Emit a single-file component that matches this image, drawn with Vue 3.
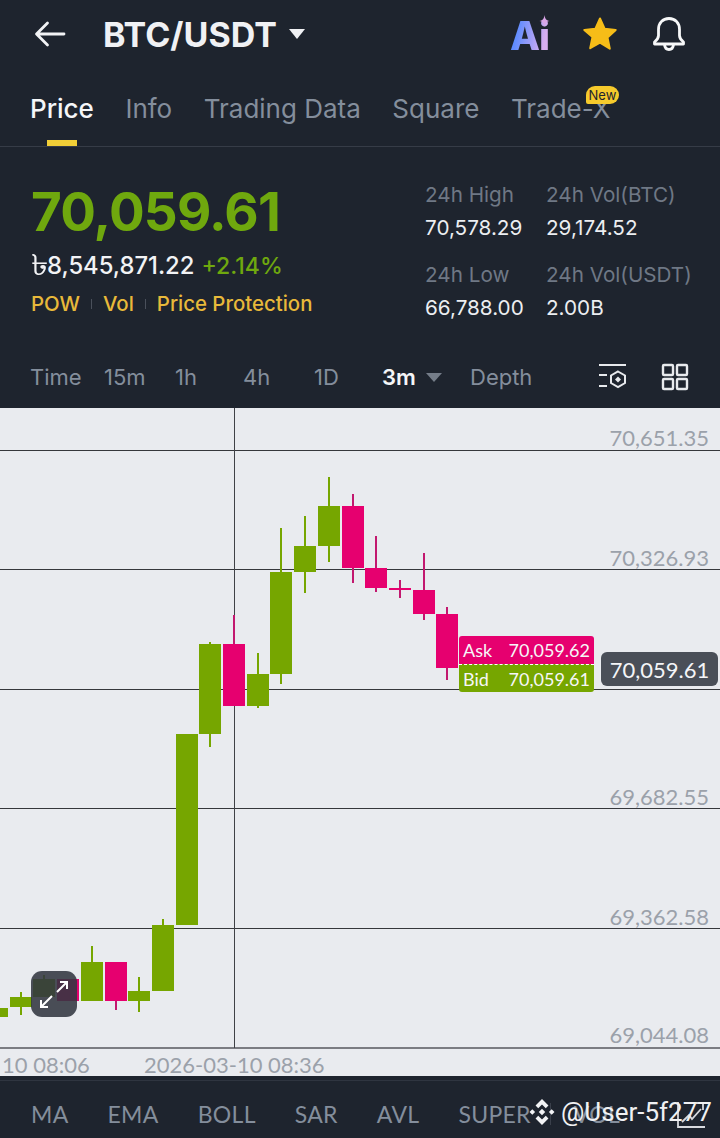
<template>
  <div class="page">
    <header class="top-bar">
      <svg class="back" width="32" height="28" viewBox="0 0 32 28" fill="none" stroke="#f2f3f5" stroke-width="2.8" stroke-linecap="round" stroke-linejoin="round">
        <path d="M30 14H3M13.5 3 2.5 14l11 11" />
      </svg>
      <h1 class="pair">BTC/USDT</h1>
      <i class="pair-caret"></i>
      <div class="top-icons">
        <span class="ai">Ai
          <svg class="spark" width="11" height="12" viewBox="0 0 12 14"><path d="M6 0c.6 4 1.600 6 6 7-4.400 1-5.400 3-6 7-.6-4-1.600-6-6-7 4.400-1 5.400-3 6-7z" fill="#d9a5e6" /></svg>
        </span>
        <svg class="star" width="36" height="36" viewBox="0 0 36 36"><path d="M18 2.500l4.700 10.300 11 1.200-8.200 7.500 2.300 11.200L18 26.600 8.200 32.200l2.300-11.200L2.300 14l11-1.200z" fill="#f6bd18" stroke="#f6bd18" stroke-width="2" stroke-linejoin="round" /></svg>
        <svg class="bell" width="36" height="36" viewBox="0 0 36 36" fill="none" stroke="#f7f8f9" stroke-width="2.800" stroke-linejoin="round" stroke-linecap="round">
          <path d="M18 2.500c-6.500 0-10.500 4.800-10.500 11v6c0 2.500-1.500 4.500-4 6.500v2h29v-2c-2.500-2-4-4-4-6.500v-6c0-6.200-4-11-10.500-11z" />
          <path d="M13.500 28.500c.3 3 2 5 4.500 5s4.200-2 4.500-5" />
        </svg>
      </div>
    </header>

    <nav class="tabs">
      <span v-for="tab in tabs" :key="tab" class="tab" :class="{ active: tab === 'Price' }">
        {{ tab }}
        <em v-if="tab === 'Trade-X'" class="new-badge">New</em>
      </span>
    </nav>

    <section class="summary">
      <div class="quote">
        <div class="last-price">70,059.61</div>
        <div class="fiat-line">
          <span class="fiat"><b class="taka">৳</b>8,545,871.22</span>
          <span class="change">+2.14%</span>
        </div>
        <div class="tags">
          <span>POW</span><i></i><span>Vol</span><i></i><span>Price Protection</span>
        </div>
      </div>
      <dl class="stats">
        <div v-for="stat in stats" :key="stat.label" class="stat">
          <dt>{{ stat.label }}</dt>
          <dd>{{ stat.value }}</dd>
        </div>
      </dl>
    </section>

    <section class="intervals">
      <span>Time</span>
      <span>15m</span>
      <span>1h</span>
      <span>4h</span>
      <span>1D</span>
      <span class="current">3m<i class="small-caret"></i></span>
      <span>Depth</span>
      <svg width="30" height="30" viewBox="0 0 30 30" fill="none" stroke="#e8eaed" stroke-width="2">
        <path d="M1 3h27M1 13h8M1 24h8" />
        <path d="M20 9.500l7 4v7.500l-7 4-7-4v-7.500z" />
        <path d="M20 14.500l3 3-3 3-3-3z" fill="#e8eaed" stroke="none" />
      </svg>
      <svg width="28" height="28" viewBox="0 0 28 28" fill="none" stroke="#e8eaed" stroke-width="2.400">
        <rect x="2" y="2" width="10" height="10" rx="1" />
        <rect x="16" y="2" width="10" height="10" rx="1" />
        <rect x="2" y="16" width="10" height="10" rx="1" />
        <rect x="16" y="16" width="10" height="10" rx="1" />
      </svg>
    </section>

    <section class="chart">
      <svg class="chart-svg" width="720" height="641" viewBox="0 408 720 641">
        <line v-for="y in gridLines" :key="y" x1="0" x2="720" :y1="y" :y2="y" stroke="#35373b" stroke-width="1" />
        <line x1="0" x2="720" y1="1048" y2="1048" stroke="#7b7c82" stroke-width="2" />
        <line x1="234.500" x2="234.500" y1="408" y2="1048" stroke="#3f4146" stroke-width="1" />
        <g v-for="c in candles" :key="c.x">
          <rect :x="c.x - 1" :y="c.high" width="2" :height="c.low - c.high" :fill="c.up ? green : pinkWick" />
          <rect :x="c.x - 11" :y="c.top" width="22" :height="c.bottom - c.top" :fill="c.up ? green : pink" />
        </g>
        <text v-for="p in priceLabels" :key="p.text" x="709" :y="p.y" text-anchor="end" class="axis-text">{{ p.text }}</text>
      </svg>

      <div class="time-axis">
        <span>10 08:06</span>
        <span>2026-03-10 08:36</span>
      </div>

      <div class="book">
        <div class="ask"><span>Ask</span><span>70,059.62</span></div>
        <div class="bid"><span>Bid</span><span>70,059.61</span></div>
      </div>
      <div class="price-tag">70,059.61</div>
      <div class="expand">
        <svg width="46" height="46" viewBox="0 0 46 46" fill="none" stroke="#fff" stroke-width="2">
          <path d="M26 21 36 11M29 11h7v7M21 25 10 36M10 29v7h7" />
        </svg>
      </div>
    </section>

    <footer class="indicators">
      <span v-for="name in indicators" :key="name">{{ name }}</span>
      <i class="sep"></i>
      <span>VOL</span>
      <svg class="chart-switch" width="30" height="28" viewBox="0 0 30 28" fill="none" stroke="#d8dade" stroke-width="1.800">
        <path d="M2 1v25h27M6 21l7-7 3 4 9-10M20 2h7v7" />
      </svg>
    </footer>

    <div class="watermark">
      <svg width="28" height="28" viewBox="0 0 26 26" fill="#f2f3f5">
        <path d="M13 1l6 6-2.500 2.500L13 6 9.500 9.500 7 7zM4 10.400L6.600 13 4 15.600 1.400 13zM22 10.400L24.600 13 22 15.600 19.400 13zM13 10l3 3-3 3-3-3zM7 19l2.500-2.500L13 20l3.500-3.500L19 19l-6 6z" />
      </svg>
      <span>@User-5f277</span>
    </div>
  </div>
</template>

<script setup>
const green = '#76a600'
const pink = '#e6006f'
const pinkWick = '#c2186f'

const tabs = ['Price', 'Info', 'Trading Data', 'Square', 'Trade-X']

const stats = [
  { label: '24h High', value: '70,578.29' },
  { label: '24h Vol(BTC)', value: '29,174.52' },
  { label: '24h Low', value: '66,788.00' },
  { label: '24h Vol(USDT)', value: '2.00B' }
]

const gridLines = [450.5, 569.5, 689.5, 808.5, 928.5]

const priceLabels = [
  { text: '70,651.35', y: 446 },
  { text: '70,326.93', y: 566 },
  { text: '69,682.55', y: 805 },
  { text: '69,362.58', y: 925 },
  { text: '69,044.08', y: 1043 }
]

const indicators = ['MA', 'EMA', 'BOLL', 'SAR', 'AVL', 'SUPER']

// page coordinates, read off the picture
const candles = [
  { x: -3, top: 1008, bottom: 1017, high: 1008, low: 1017, up: true },
  { x: 21, top: 997, bottom: 1007, high: 992, low: 1015, up: true },
  { x: 44, top: 979, bottom: 997, high: 975, low: 997, up: true },
  { x: 68, top: 979, bottom: 1001, high: 979, low: 1001, up: false },
  { x: 92, top: 962, bottom: 1001, high: 946, low: 1001, up: true },
  { x: 116, top: 962, bottom: 1001, high: 962, low: 1010, up: false },
  { x: 139, top: 991, bottom: 1001, high: 977, low: 1012, up: true },
  { x: 163, top: 925, bottom: 991, high: 919, low: 991, up: true },
  { x: 187, top: 734, bottom: 925, high: 734, low: 925, up: true },
  { x: 210, top: 644, bottom: 734, high: 642, low: 747, up: true },
  { x: 234, top: 644, bottom: 706, high: 615, low: 706, up: false },
  { x: 258, top: 674, bottom: 706, high: 653, low: 708, up: true },
  { x: 281, top: 572, bottom: 674, high: 528, low: 684, up: true },
  { x: 305, top: 546, bottom: 572, high: 516, low: 593, up: true },
  { x: 329, top: 506, bottom: 546, high: 477, low: 562, up: true },
  { x: 353, top: 506, bottom: 568, high: 494, low: 583, up: false },
  { x: 376, top: 568, bottom: 588, high: 536, low: 592, up: false },
  { x: 400, top: 588, bottom: 590, high: 580, low: 598, up: false },
  { x: 424, top: 590, bottom: 614, high: 553, low: 620, up: false },
  { x: 447, top: 614, bottom: 668, high: 607, low: 680, up: false }
]
</script>

<style>
html,
body {
  margin: 0;
  background: #1e242e;
}
</style>

<style scoped>
.page {
  position: relative;
  width: 720px;
  height: 1138px;
  overflow: hidden;
  background: #1e242e;
  font-family: Inter, "Noto Sans", sans-serif;
  color: #848e9c;
}

.top-bar {
  height: 68px;
  display: flex;
  align-items: center;
  padding: 0 33px 0 34px;
  box-sizing: border-box;
}

.pair {
  margin: 0 0 0 37px;
  font-size: 34px;
  font-weight: 700;
  color: #f0f1f4;
}

.pair-caret {
  margin-left: 12px;
  border-left: 8px solid transparent;
  border-right: 8px solid transparent;
  border-top: 10px solid #f0f1f4;
}

.top-icons {
  margin-left: auto;
  display: flex;
  align-items: center;
  gap: 33px;
}

.ai {
  position: relative;
  margin-top: 4px;
  font-size: 39px;
  font-weight: 800;
  letter-spacing: -1px;
  line-height: 40px;
  background: linear-gradient(100deg, #5f8cff 20%, #d8aef0 85%);
  -webkit-background-clip: text;
  background-clip: text;
  color: transparent;
}

.spark {
  position: absolute;
  top: -1px;
  right: -1px;
}

.tabs {
  height: 79px;
  box-sizing: border-box;
  display: flex;
  gap: 31.500px;
  padding: 26px 0 0 30px;
  border-bottom: 1px solid #363c47;
}

.tab {
  position: relative;
  font-size: 26px;
  line-height: 30px;
  height: 30px;
  color: #848e9c;
}

.tab.active {
  color: #f5f6f8;
  font-weight: 500;
}

.tab.active::after {
  content: '';
  position: absolute;
  left: 17px;
  width: 30px;
  top: 46px;
  height: 6px;
  background: #f2cf37;
}

.new-badge {
  position: absolute;
  left: 75px;
  top: -8px;
  width: 33px;
  height: 18px;
  border-radius: 9px 9px 9px 2px;
  background: #f6ca2c;
  color: #1e242e;
  font-style: normal;
  font-size: 13px;
  line-height: 18px;
  text-align: center;
}

.summary {
  height: 203px;
  box-sizing: border-box;
  display: flex;
  justify-content: space-between;
  padding: 33px 0 0 31px;
}

.last-price {
  font-size: 53px;
  line-height: 64px;
  font-weight: 700;
  color: #6fa80e;
  letter-spacing: -0.8px;
}

.fiat-line {
  margin-top: 7px;
  display: flex;
  align-items: center;
  gap: 7px;
  font-size: 23px;
  line-height: 30px;
  font-weight: 500;
}

.fiat {
  font-size: 23.800px;
  color: #f2f3f5;
}

.taka {
  display: inline-block;
  width: 16px;
  font-weight: 500;
  transform: scale(1.45, 1.2);
  transform-origin: 0 60%;
}

.change {
  color: #6fa80e;
}

.tags {
  margin-top: 8px;
  display: flex;
  align-items: center;
  font-size: 20.400px;
  line-height: 30px;
  font-weight: 500;
  color: #e8b93a;
}

.tags i {
  width: 1px;
  height: 10px;
  margin: 0 11px;
  background: #4a505b;
}

.stats {
  margin: 0;
  width: 295px;
  display: grid;
  grid-template-columns: 121px 1fr;
  row-gap: 17.500px;
  align-content: start;
}

.stat dt {
  font-size: 20.700px;
  line-height: 30px;
  color: #6f7885;
}

.stat dd {
  margin: 2.500px 0 0;
  font-size: 20.700px;
  line-height: 30px;
  color: #eceef1;
}

.intervals {
  height: 58px;
  box-sizing: border-box;
  padding: 0 0 4px 30px;
  display: grid;
  grid-template-columns: 74px 71px 68px 71px 68px 88px 128px 63px auto;
  align-items: center;
  font-size: 22px;
}

.intervals .current {
  display: flex;
  align-items: center;
  color: #f5f6f8;
  font-weight: 600;
}

.small-caret {
  margin-left: 10px;
  border-left: 8px solid transparent;
  border-right: 8px solid transparent;
  border-top: 9px solid #757d89;
}

.chart {
  position: relative;
  height: 668px;
  background: #e9ebef;
}

.chart-svg {
  display: block;
}

.axis-text {
  font-family: Lato, "Open Sans", sans-serif;
  font-size: 22px;
  fill: #9ba1aa;
}

.time-axis {
  height: 27px;
  box-sizing: border-box;
  padding: 5px 0 0 2px;
  display: grid;
  grid-template-columns: 142px auto;
  font-family: Lato, "Open Sans", sans-serif;
  font-size: 22px;
  line-height: 22px;
  color: #9ba1aa;
}

.book {
  position: absolute;
  left: 459px;
  top: 228px;
  width: 135px;
  color: #f6f6f8;
  font-family: Lato, "Open Sans", sans-serif;
  font-size: 18px;
}

.book > div {
  height: 28px;
  display: flex;
  align-items: center;
  justify-content: space-between;
  padding: 0 4px;
  box-sizing: border-box;
}

.ask {
  background: #e6006f;
  border-radius: 3px 3px 0 0;
}

.bid {
  background: #76a600;
  border-top: 1px dashed #fff;
  border-radius: 0 0 3px 3px;
}

.price-tag {
  position: absolute;
  left: 601px;
  top: 244px;
  width: 117px;
  height: 34px;
  border-radius: 6px;
  background: #4a4f58;
  color: #f4f5f7;
  font-family: Lato, "Open Sans", sans-serif;
  font-size: 22px;
  line-height: 36px;
  text-align: center;
}

.expand {
  position: absolute;
  left: 31px;
  top: 563px;
  width: 46px;
  height: 46px;
  border-radius: 11px;
  background: rgba(50, 55, 65, 0.88);
}

.indicators {
  position: relative;
  height: 62px;
  box-sizing: border-box;
  display: flex;
  align-items: center;
  gap: 39px;
  padding: 14px 0 0 31px;
  font-family: Lato, "Open Sans", sans-serif;
  font-size: 23px;
  letter-spacing: 0.3px;
  color: #848e9c;
}

.indicators::before {
  content: '';
  position: absolute;
  left: 0;
  right: 0;
  top: 4px;
  height: 1px;
  background: #2f3540;
}

.sep {
  width: 1px;
  height: 22px;
  margin: 0 -16px 0 -20px;
  background: #3a404b;
}

.chart-switch {
  position: absolute;
  left: 676px;
  top: 25px;
}

.watermark {
  position: absolute;
  left: 528px;
  top: 1097px;
  display: flex;
  align-items: center;
  gap: 5px;
  font-family: Roboto, sans-serif;
  font-size: 26px;
  color: #f0f1f3;
}
</style>
